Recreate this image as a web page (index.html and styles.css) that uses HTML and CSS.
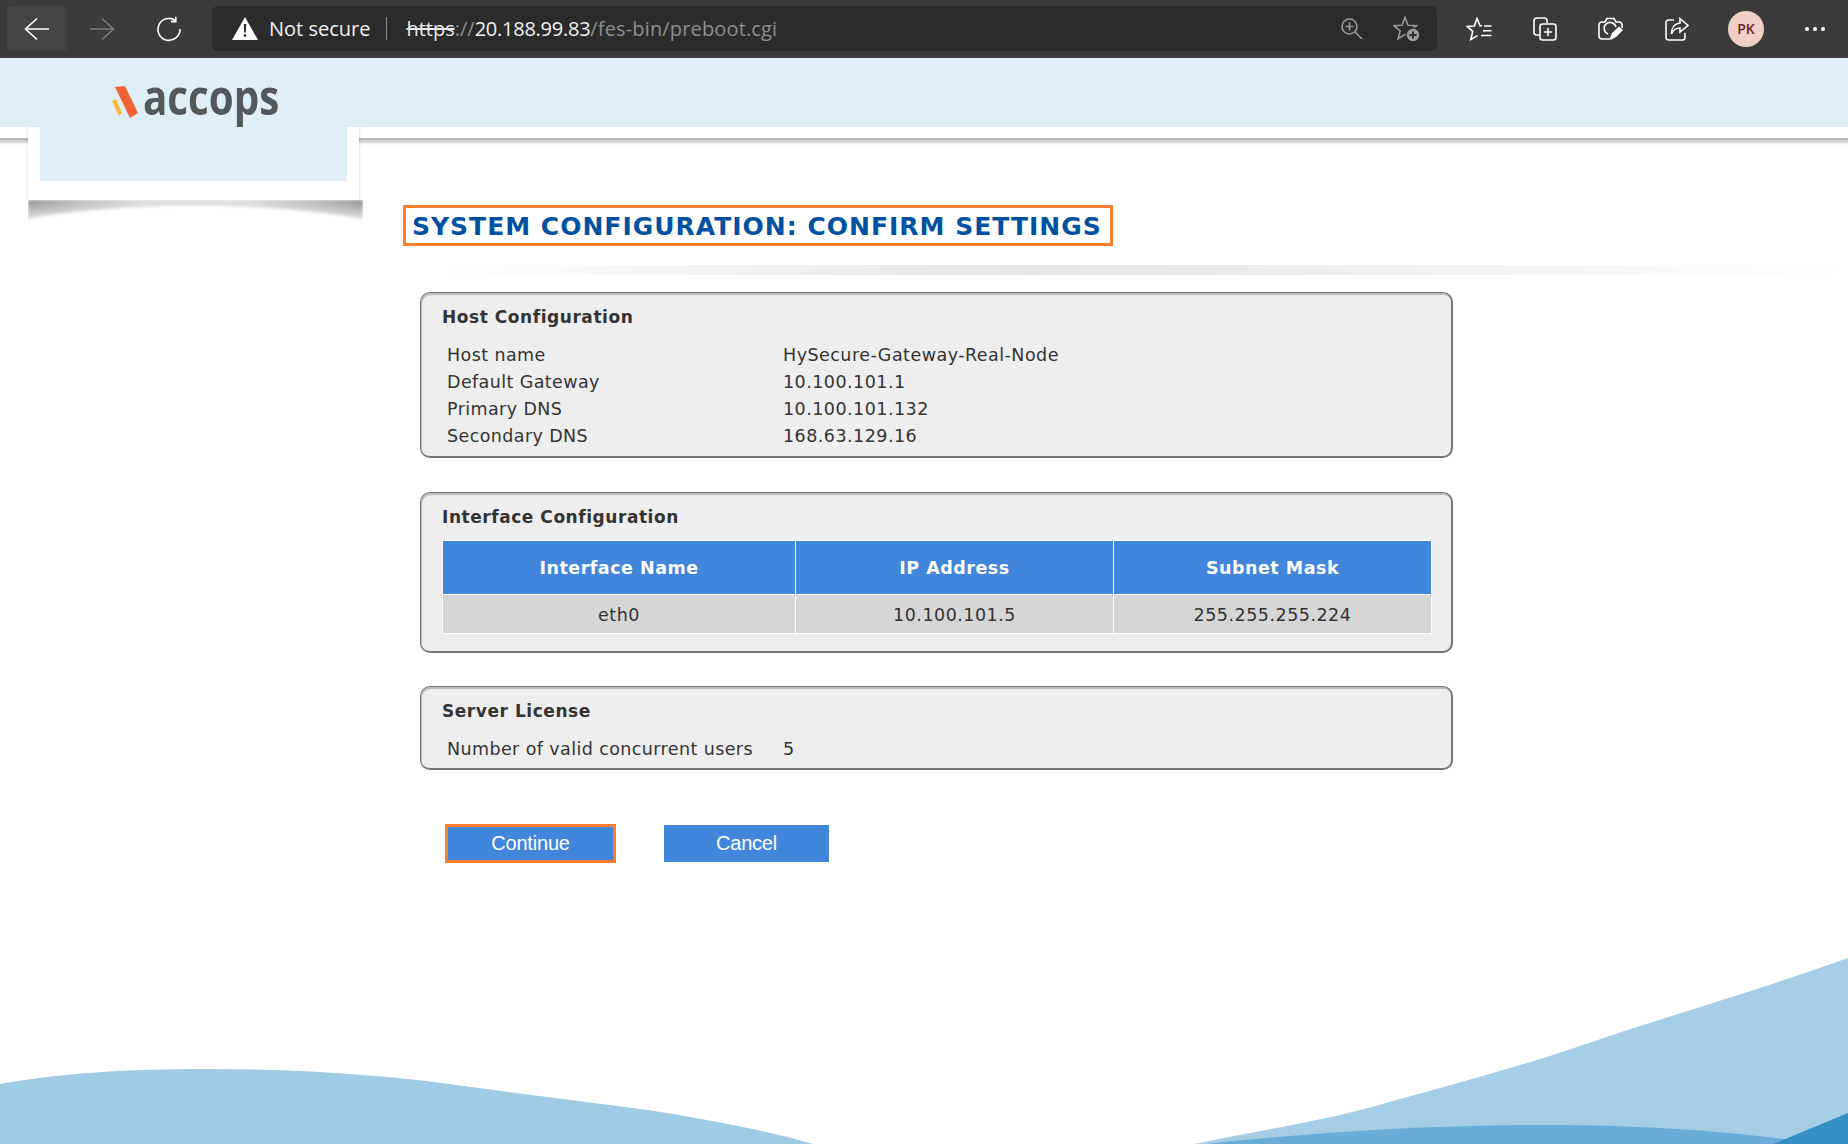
FILE: index.html
```html
<!DOCTYPE html>
<html lang="en">
<head>
<meta charset="utf-8">
<title>System Configuration</title>
<link rel="stylesheet" href="styles.css">
</head>
<body>
<header class="browser">
  <div class="nav">
    <span class="nav-btn nav-active">
      <svg width="26" height="24" viewBox="0 0 26 24"><path d="M13 1.500 1.500 12 13 22.500M1.500 12H25" class="s-white"/></svg>
    </span>
    <span class="nav-btn">
      <svg width="26" height="24" viewBox="0 0 26 24"><path d="M13 1.500 24.500 12 13 22.500M24.500 12H1" class="s-dim"/></svg>
    </span>
    <span class="nav-btn nav-reload">
      <svg width="26" height="26" viewBox="0 0 26 26"><path d="M19.500 4.500A11 11 0 1 0 24 13M19.800 .8V5.600H15" class="s-white"/></svg>
    </span>
  </div>
  <div class="address">
    <svg class="warn" width="26" height="23" viewBox="0 0 26 23"><path d="M13 0 26 23H0Z" fill="#fff"/><path d="M11.800 7h2.400l-.4 8.500h-1.600ZM11.800 17.200h2.400v2.500h-2.400Z" fill="#2b2b2b"/></svg>
    <span class="not-secure">Not secure</span>
    <span class="sep"></span>
    <span class="url"><s class="url-scheme">https</s><span class="url-dim">://</span><span class="url-host">20.188.99.83</span><span class="url-path">/fes-bin/preboot.cgi</span></span>
    <span class="addr-icons">
      <svg width="22" height="22" viewBox="0 0 22 22"><circle cx="8.500" cy="8.500" r="7.500" class="s-grey"/><path d="M14 14l7 7M8.500 4.500v8M4.500 8.500h8" class="s-grey"/></svg>
      <svg width="28" height="26" viewBox="0 0 28 26"><path d="M12 1.500 15 9.300 23.400 9.700 16.800 14.800 19 23 12 18.400 5 23 7.200 14.800 .6 9.700 9 9.300Z" class="s-grey"/><circle cx="20" cy="19" r="7.500" fill="#2b2b2b"/><circle cx="20" cy="19" r="6.200" fill="#9a9a9a"/><path d="M20 15.500v7M16.500 19h7" stroke="#2b2b2b" stroke-width="1.800"/></svg>
    </span>
  </div>
  <div class="tools">
    <span class="tool"><svg width="26" height="24" viewBox="0 0 26 24"><path d="M16 8.800H14L11 1.500 8.300 9 1.200 9.400 6.700 14.400 4.800 22.500 11.500 18.600" class="s-white"/><path d="M18 9H25.500M17 13.800H25.500M15 18.500H25.500" class="s-white"/></svg></span>
    <span class="tool"><svg width="24" height="24" viewBox="0 0 24 24"><path d="M6 18H3.500A2.500 2.500 0 0 1 1 15.500V4A3 3 0 0 1 4 1H11.500A2.500 2.500 0 0 1 14 3.500V6" class="s-white"/><rect x="7" y="7" width="16" height="16" rx="2.500" class="s-white"/><path d="M15 11v8M11 15h8" class="s-white"/></svg></span>
    <span class="tool"><svg width="26" height="24" viewBox="0 0 26 24"><path d="M12 22H4A3 3 0 0 1 1 19V8A3 3 0 0 1 4 5H7L9 1.500H16L18 5H21A3 3 0 0 1 24 8V11" class="s-white"/><path d="M10 17A6 6 0 1 1 18 10" class="s-white"/><path d="M12 21 14 16 21 9.500 25 13 18 20 12.500 23Z" fill="#fff"/></svg></span>
    <span class="tool"><svg width="24" height="24" viewBox="0 0 24 24"><path d="M9 3H3.500A2.500 2.500 0 0 0 1 5.500V20.500A2.500 2.500 0 0 0 3.500 23H17.500A2.500 2.500 0 0 0 20 20.500V16" class="s-white"/><path d="M15 1.500 23 8.500 15 15V11C11 11 8 13 6.500 17 6.500 11 9.500 6.500 15 6Z" class="s-white"/></svg></span>
    <span class="tool tool-wide"><span class="avatar">PK</span></span>
    <span class="tool"><span class="dots"><i></i><i></i><i></i></span></span>
  </div>
</header>

<div class="band"></div>
<div class="band-shadow"></div>

<div class="logo-shadow-clip">
  <svg class="logo-shadow" width="335" height="24" viewBox="0 0 335 24" aria-hidden="true">
    <defs>
      <linearGradient id="tabShade" x1="0" x2="1" y1="0" y2="0">
        <stop offset="0" stop-color="#8f8f8f"/>
        <stop offset=".14" stop-color="#b5b5b5"/>
        <stop offset=".35" stop-color="#dadada"/>
        <stop offset=".65" stop-color="#dadada"/>
        <stop offset=".86" stop-color="#b5b5b5"/>
        <stop offset="1" stop-color="#8f8f8f"/>
      </linearGradient>
    </defs>
    <path d="M0 0H335V20C300 11 230 6 167 6S35 11 0 20Z" fill="url(#tabShade)"/>
  </svg>
</div>
<div class="logo-tab">
  <div class="logo-inner"></div>
</div>
<div class="logo">
  <svg width="28" height="34" viewBox="0 0 28 34"><path d="M3 1 13 0 26 27 18 32Z" fill="#ef6337"/><path d="M0 15 4 13 10 27 7 30Z" fill="#f5b93e"/></svg>
  <span class="logo-text">accops</span>
</div>

<svg class="waves" viewBox="0 940 1848 204" width="1848" height="204" aria-hidden="true">
  <path d="M0 1084C60 1073 130 1069 206 1069 300 1069 390 1075 471 1087 530 1095 590 1102 648 1110 705 1119 760 1129 813 1144H0Z" fill="#a0cbe4"/>
  <path d="M1195 1144C1260 1130 1325 1121 1386 1103 1450 1085 1515 1068 1577 1047 1670 1015 1760 990 1848 958V1144Z" fill="#a5cde5"/>
  <path d="M1205 1144C1320 1132 1430 1125 1544 1125 1630 1125 1720 1130 1790 1140V1144Z" fill="#69acd6"/>
  <path d="M1773 1144 1848 1113V1144Z" fill="#3590c6"/>
</svg>

<main class="main">
  <h1 class="title">SYSTEM CONFIGURATION: CONFIRM SETTINGS</h1>
  <div class="rule"></div>

  <section class="panel panel-host">
    <h2 class="panel-title">Host Configuration</h2>
    <dl class="rows">
      <div class="row"><dt>Host name</dt><dd>HySecure-Gateway-Real-Node</dd></div>
      <div class="row"><dt>Default Gateway</dt><dd>10.100.101.1</dd></div>
      <div class="row"><dt>Primary DNS</dt><dd>10.100.101.132</dd></div>
      <div class="row"><dt>Secondary DNS</dt><dd>168.63.129.16</dd></div>
    </dl>
  </section>

  <section class="panel panel-iface">
    <h2 class="panel-title">Interface Configuration</h2>
    <table class="iface">
      <thead>
        <tr><th class="c1">Interface Name</th><th class="c2">IP Address</th><th class="c3">Subnet Mask</th></tr>
      </thead>
      <tbody>
        <tr><td>eth0</td><td>10.100.101.5</td><td>255.255.255.224</td></tr>
      </tbody>
    </table>
  </section>

  <section class="panel panel-license">
    <h2 class="panel-title">Server License</h2>
    <dl class="rows">
      <div class="row"><dt>Number of valid concurrent users</dt><dd>5</dd></div>
    </dl>
  </section>

  <div class="actions">
    <button class="btn btn-focus" type="button">Continue</button>
    <button class="btn btn-cancel" type="button">Cancel</button>
  </div>
</main>
</body>
</html>
```

FILE: styles.css
```css
* { box-sizing: border-box; }
html, body { margin: 0; padding: 0; }
body {
  position: relative;
  width: 1848px;
  height: 1144px;
  overflow: hidden;
  background: #fff;
  font-family: "DejaVu Sans", sans-serif;
  color: #333;
}

/* browser chrome */
.browser {
  display: flex;
  align-items: center;
  height: 58px;
  background: #3b3b3b;
  padding: 0 0 1px 7px;
}
.nav { display: flex; width: 205px; flex: none; }
.nav-btn {
  display: flex;
  align-items: center;
  justify-content: center;
  width: 66px;
  height: 45px;
  border-radius: 4px;
}
.nav-active { width: 60px; background: #444; margin-right: 2px; }
.nav-reload { padding-left: 2px; }
.s-white { fill: none; stroke: #fff; stroke-width: 1.6; }
.s-dim { fill: none; stroke: #7b7b7b; stroke-width: 1.6; }
.s-grey { fill: none; stroke: #9a9a9a; stroke-width: 1.6; }

.address {
  display: flex;
  align-items: center;
  width: 1225px;
  height: 45px;
  flex: none;
  background: #2b2b2b;
  border-radius: 6px;
  padding-left: 20px;
  font-family: "Open Sans", sans-serif;
  font-size: 20px;
}
.warn { flex: none; }
.not-secure { color: #f2f2f2; margin-left: 11px; }
.sep { width: 1px; height: 23px; background: #8a8a8a; margin: 0 19px 0 16px; }
.url { color: #8e8e8e; }
.url-scheme { color: #e8e8e8; }
.url-dim { color: #8e8e8e; }
.url-host { color: #f2f2f2; letter-spacing: -.25px; }
.url-path { color: #8e8e8e; letter-spacing: .15px; }
.addr-icons {
  margin-left: auto;
  display: flex;
  align-items: center;
  gap: 30px;
  padding-right: 16px;
}

.tools { display: flex; align-items: center; margin-left: 9px; }
.tool {
  display: flex;
  align-items: center;
  justify-content: center;
  width: 66px;
  height: 45px;
}
.tool-wide { width: 72px; }
.avatar {
  display: flex;
  align-items: center;
  justify-content: center;
  width: 36px;
  height: 36px;
  border-radius: 50%;
  background: #f0d0c6;
  color: #6b2318;
  font-family: "Open Sans", sans-serif;
  font-size: 14px;
  font-weight: 600;
}
.dots { display: flex; gap: 4px; }
.dots i { width: 4px; height: 4px; border-radius: 50%; background: #fff; }

/* page header */
.band { height: 69px; background: #e0eef8; }
.band-shadow {
  height: 18px;
  background: linear-gradient(#fff 0, #fff 11px, #b0b0b0 11px, #fff 18px);
}
.logo-tab {
  position: absolute;
  left: 28px;
  top: 127px;
  width: 331px;
  height: 73px;
  background: #fff;
  padding: 0 12px;
  box-shadow: 0 0 4px rgba(0, 0, 0, .16);
  clip-path: inset(0 -8px 0 -8px);
}
.logo-inner { height: 54px; background: #e0eef8; }
.logo-shadow-clip {
  position: absolute;
  left: 28px;
  top: 200px;
  width: 335px;
  height: 26px;
  overflow: hidden;
}
.logo-shadow {
  display: block;
  filter: blur(1.5px);
  -webkit-mask-image: linear-gradient(#000, rgba(0, 0, 0, .6) 45%, rgba(0, 0, 0, 0));
  mask-image: linear-gradient(#000, rgba(0, 0, 0, .6) 45%, rgba(0, 0, 0, 0));
}
.logo {
  position: absolute;
  left: 112px;
  top: 70px;
  display: flex;
  align-items: flex-start;
}
.logo svg { margin-top: 16px; }
.logo-text {
  display: block;
  margin-left: 3px;
  margin-top: -3px;
  color: #55585a;
  font-family: "Open Sans", sans-serif;
  font-weight: 700;
  font-size: 48px;
  line-height: 60px;
  transform: scaleX(.84);
  transform-origin: 0 0;
}

.waves { position: absolute; left: 0; bottom: 0; display: block; }

/* main */
.main {
  position: relative;
  padding: 60px 0 0 403px;
}
.title {
  width: 710px;
  height: 41px;
  margin: 0;
  border: 3px solid #f97f2e;
  padding: 0 0 0 6px;
  color: #00519f;
  font-size: 25px;
  font-weight: 700;
  letter-spacing: 1px;
  line-height: 37px;
  white-space: nowrap;
}
.rule {
  height: 10px;
  margin: 19px 0 17px 37px;
  background: linear-gradient(90deg, #fff 0, #e5e5e5 42%, #fff 100%);
}
.panel {
  width: 1033px;
  margin-left: 17px;
  background: #eee;
  border-style: solid;
  border-color: #747474;
  border-width: 1px 2px 2px 1px;
  border-radius: 10px;
  box-shadow: inset 1px 2px 0 #bdbdbd;
}
.panel-host { height: 166px; margin-bottom: 34px; padding: 13px 0 0 21px; }
.panel-iface { height: 161px; margin-bottom: 33px; padding: 13px 0 0 21px; }
.panel-license { height: 84px; padding: 13px 0 0 21px; }
.panel-title {
  margin: 0;
  font-size: 17px;
  font-weight: 700;
  letter-spacing: .55px;
  line-height: 22px;
  color: #333;
}
.rows { margin: 14px 0 0 5px; }
.row {
  display: flex;
  height: 27px;
  line-height: 27px;
  font-size: 17.500px;
  letter-spacing: .4px;
}
.row dt { width: 336px; flex: none; }
.row dd { margin: 0; letter-spacing: .47px; }

.iface {
  margin-top: 12px;
  width: 989px;
  border-collapse: collapse;
  table-layout: fixed;
  font-size: 17.500px;
  letter-spacing: .5px;
}
.iface th {
  height: 54px;
  background: #4186da;
  color: #fff;
  font-weight: 700;
  border: 1px solid #fff;
}
.iface td {
  height: 39px;
  background: #d6d6d6;
  text-align: center;
  border: 1px solid #fff;
  padding: 2px 0 0;
}
.c1 { width: 353px; }
.c2 { width: 318px; }
.c3 { width: 318px; }

.actions {
  display: flex;
  align-items: center;
  gap: 48px;
  margin: 54px 0 0 42px;
}
.btn {
  height: 37px;
  border: 0;
  padding: 0;
  background: #4186da;
  color: #fff;
  font-family: "Liberation Sans", sans-serif;
  font-size: 20px;
  letter-spacing: -.2px;
}
.btn-focus { width: 171px; height: 39px; border: 3px solid #f97f2e; }
.btn-cancel { width: 165px; }
```
